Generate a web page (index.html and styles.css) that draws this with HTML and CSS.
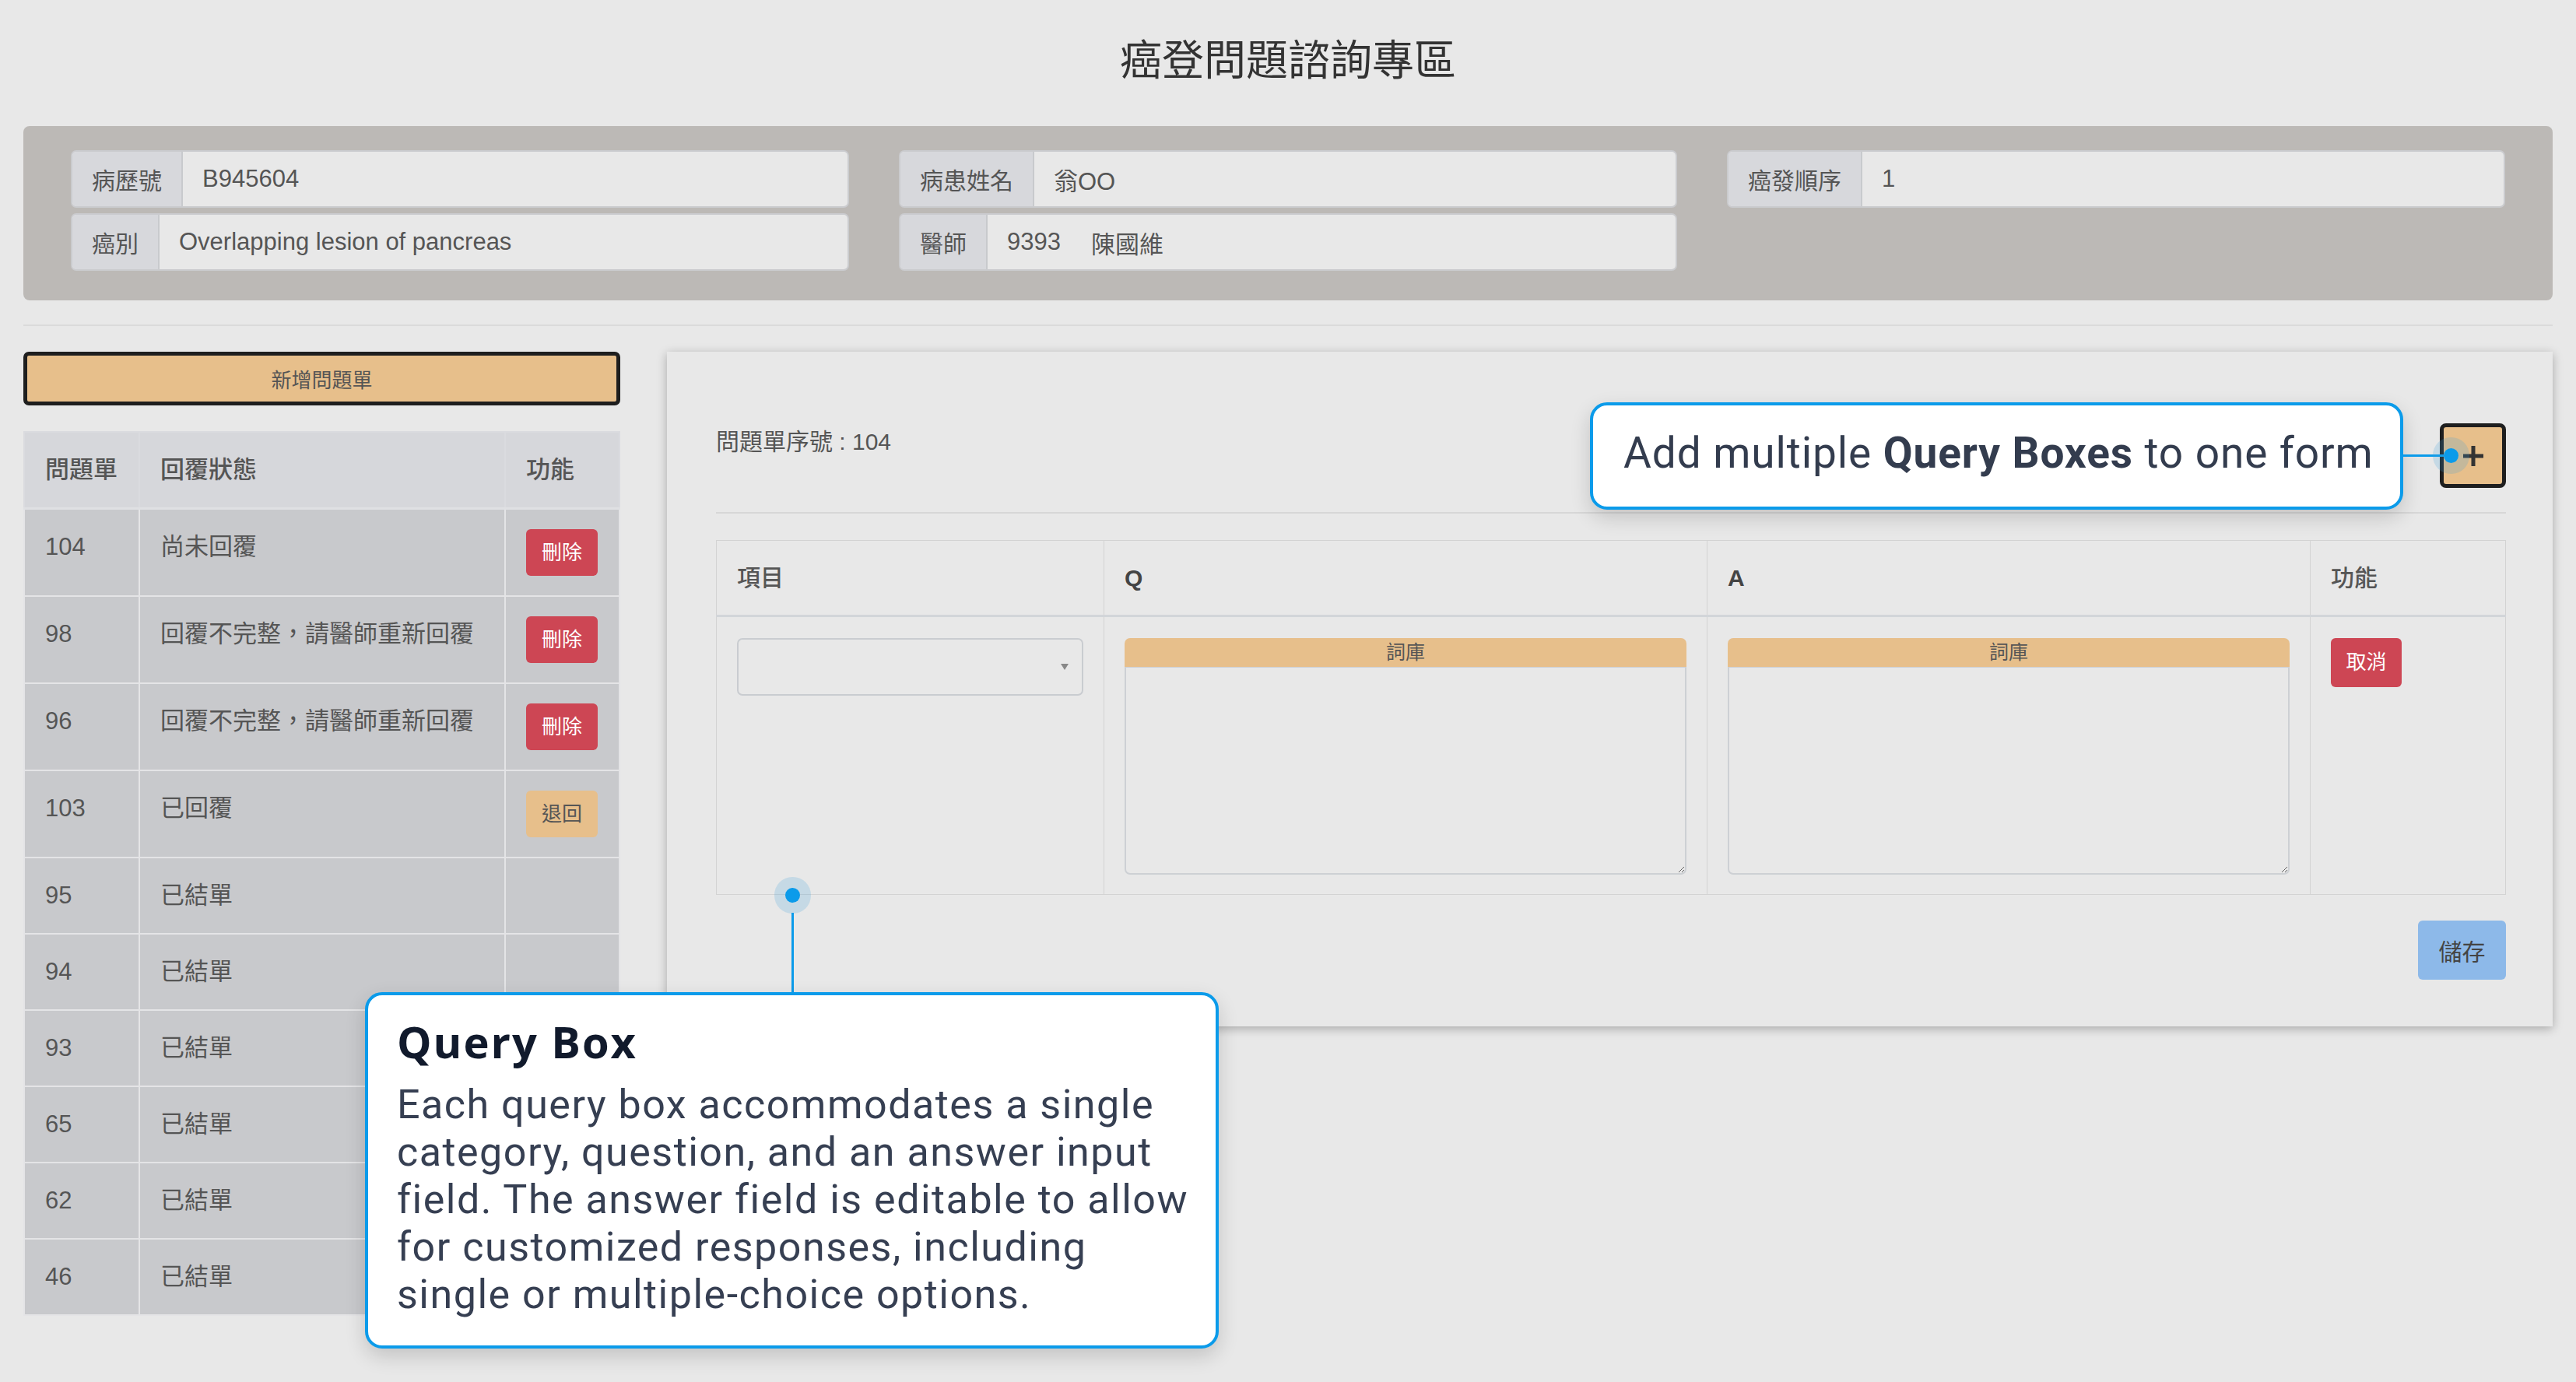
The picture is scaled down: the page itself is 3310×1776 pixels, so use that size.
FILE: index.html
```html
<!DOCTYPE html>
<html lang="zh-Hant">
<head>
<meta charset="utf-8">
<title>癌登問題諮詢專區</title>
<link rel="stylesheet" href="styles.css">
</head>
<body>
<div class="page">
  <h1 class="title">癌登問題諮詢專區</h1>

  <section class="info-panel">
    <div class="info-col">
      <div class="field"><span class="field-label">病歷號</span><span class="field-value">B945604</span></div>
      <div class="field"><span class="field-label">癌別</span><span class="field-value">Overlapping lesion of pancreas</span></div>
    </div>
    <div class="info-col">
      <div class="field"><span class="field-label">病患姓名</span><span class="field-value">翁OO</span></div>
      <div class="field"><span class="field-label">醫師</span><span class="field-value">9393<span class="gap"></span>陳國維</span></div>
    </div>
    <div class="info-col">
      <div class="field"><span class="field-label">癌發順序</span><span class="field-value">1</span></div>
    </div>
  </section>

  <hr class="divider">

  <div class="main">
    <aside class="sidebar">
      <button class="btn-new" type="button">新增問題單</button>
      <table class="list-table">
        <colgroup><col class="c1"><col class="c2"><col class="c3"></colgroup>
        <thead>
          <tr><th>問題單</th><th>回覆狀態</th><th>功能</th></tr>
        </thead>
        <tbody>
          <tr><td>104</td><td>尚未回覆</td><td><span class="btn-sm btn-red">刪除</span></td></tr>
          <tr><td>98</td><td>回覆不完整，請醫師重新回覆</td><td><span class="btn-sm btn-red">刪除</span></td></tr>
          <tr><td>96</td><td>回覆不完整，請醫師重新回覆</td><td><span class="btn-sm btn-red">刪除</span></td></tr>
          <tr><td>103</td><td>已回覆</td><td><span class="btn-sm btn-orange">退回</span></td></tr>
          <tr><td>95</td><td>已結單</td><td></td></tr>
          <tr><td>94</td><td>已結單</td><td></td></tr>
          <tr><td>93</td><td>已結單</td><td></td></tr>
          <tr><td>65</td><td>已結單</td><td></td></tr>
          <tr><td>62</td><td>已結單</td><td></td></tr>
          <tr><td>46</td><td>已結單</td><td></td></tr>
        </tbody>
      </table>
    </aside>

    <section class="card">
      <div class="card-head">
        <div class="form-no">問題單序號 : 104</div>
        <button class="btn-add" type="button" aria-label="add">
          <svg width="30" height="30" viewBox="0 0 30 30"><path d="M15 2v26M2 15h26" stroke="#333" stroke-width="5" fill="none"/></svg>
        </button>
      </div>
      <table class="query-table">
        <colgroup><col class="q1"><col class="q2"><col class="q3"><col class="q4"></colgroup>
        <thead>
          <tr><th>項目</th><th class="latin">Q</th><th class="latin">A</th><th>功能</th></tr>
        </thead>
        <tbody>
          <tr>
            <td><div class="select-box"><span class="caret"></span></div></td>
            <td><div class="lib-bar">詞庫</div><textarea class="answer"></textarea></td>
            <td><div class="lib-bar">詞庫</div><textarea class="answer"></textarea></td>
            <td><span class="btn-cancel">取消</span></td>
          </tr>
        </tbody>
      </table>
      <div class="card-foot"><button class="btn-save" type="button">儲存</button></div>
    </section>
  </div>

  <!-- annotation: add button -->
  <div class="note note-add">Add multiple&nbsp;<b>Query Boxes</b>&nbsp;to one form</div>
  <div class="link-h"></div>
  <div class="dot dot-add"></div>

  <!-- annotation: query box -->
  <div class="dot dot-box"></div>
  <div class="link-v"></div>
  <div class="note note-box">
    <div class="note-title">Query Box</div>
    <div class="note-body">
      <div class="note-line">Each query box accommodates a single</div>
      <div class="note-line">category, question, and an answer input</div>
      <div class="note-line">field. The answer field is editable to allow</div>
      <div class="note-line">for customized responses, including</div>
      <div class="note-line">single or multiple-choice options.</div>
    </div>
  </div>
</div>
</body>
</html>
```

FILE: styles.css
```css
html, body {
  margin: 0;
  padding: 0;
}

body {
  background: #e8e8e8;
  font-family: "Liberation Sans", "Noto Sans CJK TC", sans-serif;
  color: #555;
}

.page {
  position: relative;
  height: 1776px;
  box-sizing: border-box;
  padding: 0 30px 0 30px;
  overflow: hidden;
}

.title {
  margin: 0;
  padding-top: 46px;
  height: 64px;
  line-height: 64px;
  font-size: 54px;
  font-weight: 400;
  text-align: center;
  color: #333;
}

/* ---------- info panel ---------- */
.info-panel {
  margin: 52px 0 0 0;
  padding: 31px 61px 38px;
  background: #bcb9b6;
  border-radius: 8px;
  display: grid;
  grid-template-columns: repeat(3, 1fr);
  column-gap: 64px;
}

.info-col {
  display: flex;
  flex-direction: column;
  gap: 7px;
}

.field {
  display: flex;
  height: 74px;
  box-sizing: border-box;
  border: 2px solid #cacbce;
  border-radius: 7px;
  overflow: hidden;
  background: #e8e8e8;
}

.field-label {
  display: flex;
  align-items: center;
  padding: 0 25px;
  background: #d7d8dc;
  border-right: 2px solid #c8cacd;
  font-size: 30px;
  color: #555;
}

.field-value {
  display: flex;
  align-items: center;
  padding: 0 25px;
  font-size: 31px;
  color: #555;
}

.gap {
  display: inline-block;
  width: 39px;
}

.divider {
  margin: 31px 0 0 0;
  height: 2px;
  border: 0;
  background: #dadada;
}

/* ---------- main ---------- */
.main {
  display: flex;
  align-items: flex-start;
  gap: 60px;
  margin-top: 33px;
}

.sidebar {
  flex: none;
  width: 767px;
}

.btn-new {
  display: block;
  width: 100%;
  height: 69px;
  box-sizing: border-box;
  border: 5px solid #1e1e1e;
  border-radius: 7px;
  background: #e7bf8b;
  font-family: inherit;
  font-size: 26px;
  color: #555;
  padding: 0;
}

.list-table {
  width: 100%;
  margin-top: 33px;
  border-collapse: collapse;
  table-layout: fixed;
}

.list-table .c1 { width: 148px; }
.list-table .c3 { width: 147px; }

.list-table th,
.list-table td {
  padding: 25px 26px;
  font-size: 31px;
  line-height: 46px;
  text-align: left;
  vertical-align: top;
  border: 2px solid #e4e4e6;
  color: #555;
  white-space: nowrap;
}

.list-table th {
  background: #d6d7db;
  font-weight: 500;
  border-color: #dadbdf;
  border-bottom: 3px solid #dfe0e3;
}

.list-table td {
  background: #c8c9cc;
}

.btn-sm {
  display: inline-block;
  width: 92px;
  height: 60px;
  line-height: 60px;
  border-radius: 6px;
  text-align: center;
  font-size: 26px;
}

.btn-red {
  background: #cd4654;
  color: #fff;
}

.btn-orange {
  background: #e7bf8b;
  color: #555;
}

/* ---------- card ---------- */
.card {
  flex: none;
  width: 2423px;
  box-sizing: border-box;
  padding: 0 60px 60px 63px;
  background: #e8e8e8;
  box-shadow: 0 3px 12px rgba(0, 0, 0, 0.28);
}

.card-head {
  display: flex;
  justify-content: space-between;
  align-items: flex-start;
  height: 208px;
  box-sizing: border-box;
  border-bottom: 2px solid #d7d7d7;
}

.form-no {
  margin-top: 93px;
  font-size: 30px;
  line-height: 46px;
  color: #555;
}

.btn-add {
  margin-top: 92px;
  width: 85px;
  height: 83px;
  box-sizing: border-box;
  padding: 0;
  border: 5px solid #1e1e1e;
  border-radius: 8px;
  background: #e7bf8b;
  display: flex;
  align-items: center;
  justify-content: center;
}

.query-table {
  width: 100%;
  margin-top: 34px;
  border-collapse: collapse;
  table-layout: fixed;
}

.query-table .q1 { width: 498px; }
.query-table .q2 { width: 775px; }
.query-table .q3 { width: 775px; }

.query-table th,
.query-table td {
  padding: 26px;
  border: 1px solid #d3d3d3;
  text-align: left;
  color: #555;
}

.query-table th {
  font-size: 30px;
  line-height: 43px;
  font-weight: 500;
  vertical-align: middle;
  border-bottom: 3px solid #d2d5d9;
}

.query-table th.latin {
  font-weight: 700;
  color: #444;
}

.query-table td {
  vertical-align: top;
  padding-top: 27px;
  padding-bottom: 25px;
}

.select-box {
  height: 74px;
  box-sizing: border-box;
  border: 2px solid #c9ccd0;
  border-radius: 7px;
  background: #e8e8e8;
  display: flex;
  align-items: center;
  justify-content: flex-end;
  padding-right: 17px;
}

.caret {
  width: 0;
  height: 0;
  border-left: 5px solid transparent;
  border-right: 5px solid transparent;
  border-top: 8px solid #888;
}

.lib-bar {
  height: 37px;
  line-height: 37px;
  background: #e7bf8b;
  border-radius: 7px 7px 0 0;
  text-align: center;
  font-size: 25px;
  color: #555;
}

.answer {
  display: block;
  width: 100%;
  height: 267px;
  box-sizing: border-box;
  margin: 0;
  border: 2px solid #cdd0d4;
  border-top-width: 1px;
  border-radius: 0 0 7px 7px;
  background: #e8e8e8;
  resize: both;
  outline: none;
}

.btn-cancel {
  display: inline-block;
  width: 91px;
  height: 63px;
  line-height: 63px;
  border-radius: 6px;
  background: #cd4654;
  color: #fff;
  font-size: 26px;
  text-align: center;
}

.card-foot {
  display: flex;
  justify-content: flex-end;
  margin-top: 33px;
}

.btn-save {
  width: 113px;
  height: 76px;
  padding: 0;
  border: 0;
  border-radius: 6px;
  background: #8db9e9;
  font-family: inherit;
  font-size: 30px;
  color: #444;
}

/* ---------- annotations ---------- */
.note {
  position: absolute;
  box-sizing: border-box;
  background: #fff;
  border: 4px solid #0b9bea;
  border-radius: 22px;
  box-shadow: 0 10px 26px rgba(0, 0, 0, 0.16);
  font-family: Roboto, "Liberation Sans", sans-serif;
  white-space: nowrap;
}

.note-add {
  left: 2043px;
  top: 517px;
  width: 1045px;
  height: 138px;
  display: flex;
  align-items: center;
  padding: 0 0 9px 39px;
  font-size: 55px;
  line-height: 64px;
  letter-spacing: 0.9px;
  color: #333c4e;
}

.note-add b {
  font-weight: 700;
}

.note-box {
  left: 469px;
  top: 1275px;
  width: 1097px;
  height: 458px;
  padding: 26px 36px 0 37px;
}

.note-title {
  font-family: "Open Sans", Roboto, sans-serif;
  font-size: 56px;
  line-height: 66px;
  font-weight: 700;
  letter-spacing: 2px;
  color: #111a2c;
}

.note-body {
  margin-top: 18px;
  font-size: 52px;
  line-height: 61px;
  letter-spacing: 1.5px;
  color: #363f52;
}

.link-h {
  position: absolute;
  left: 3088px;
  top: 584px;
  width: 52px;
  height: 3px;
  background: #0b9bea;
}

.link-v {
  position: absolute;
  left: 1017px;
  top: 1173px;
  width: 3px;
  height: 102px;
  background: #0b9bea;
}

.dot {
  position: absolute;
  width: 19px;
  height: 19px;
  border-radius: 50%;
  background: #0b9bea;
  box-shadow: 0 0 0 14px rgba(60, 160, 220, 0.2);
}

.dot-add {
  left: 3140px;
  top: 576px;
}

.dot-box {
  left: 1009px;
  top: 1141px;
}
```
